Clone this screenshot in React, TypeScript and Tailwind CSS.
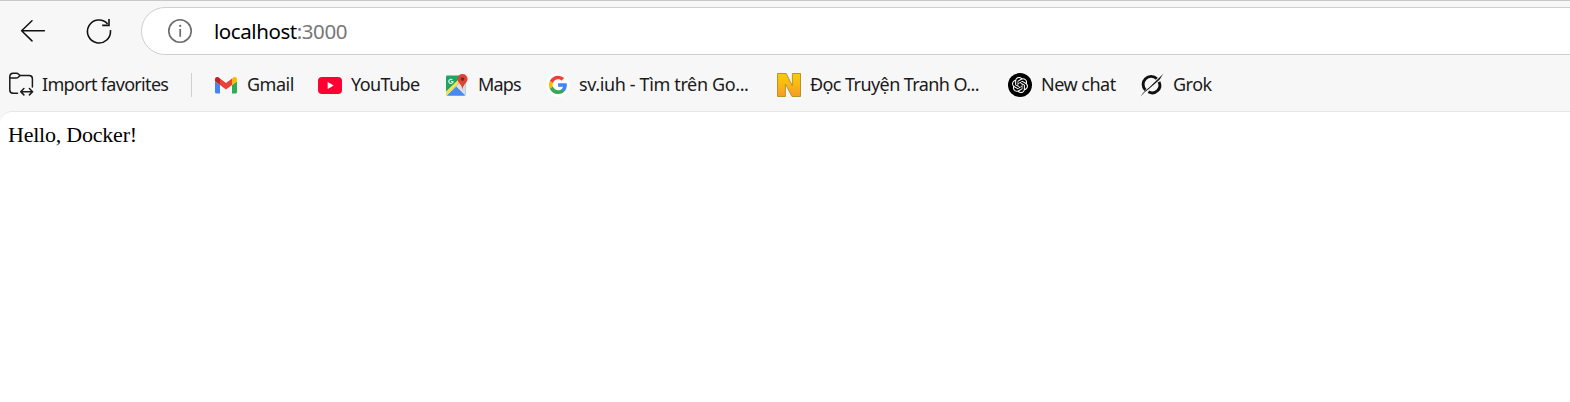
import type { ReactNode } from "react";
import { SiOpenai } from "react-icons/si";

function BackIcon() {
  return (
    <svg width="26" height="24" viewBox="0 0 26 24" fill="none" stroke="#111" strokeWidth="1.5" strokeLinecap="round" strokeLinejoin="round">
      <path d="M24.4 11.8H1.6M12 1.7L1.6 11.8L12 21.9" />
    </svg>
  );
}

function ReloadIcon() {
  return (
    <svg width="26" height="26" viewBox="0 0 26 26" fill="none" stroke="#111" strokeWidth="1.6">
      <path d="M24.4 12.2A11.5 11.5 0 1 1 21.6 5.9" />
      <path d="M23 .9V7.4H16.2" />
    </svg>
  );
}

function InfoIcon() {
  return (
    <svg width="24" height="24" viewBox="0 0 24 24" fill="none" stroke="#6b6b6b">
      <circle cx="12" cy="12" r="11.2" strokeWidth="1.6" />
      <path d="M12.2 10V17.8" strokeWidth="1.7" />
      <circle cx="12.2" cy="6.9" r="1.1" fill="#6b6b6b" stroke="none" />
    </svg>
  );
}

function ImportIcon() {
  return (
    <svg width="26" height="26" viewBox="0 0 26 26" fill="none" stroke="#1a1a1a" strokeWidth="1.5" strokeLinecap="round" strokeLinejoin="round">
      <path d="M9.5 21.3H5A3.3 3.3 0 0 1 1.8 18V4.3A3.3 3.3 0 0 1 5 1.2H8.6Q9.7 1.2 10.4 2L12 3.5H21.2A3.3 3.3 0 0 1 24.4 6.8V15" />
      <path d="M1.9 6.1H8Q9.4 6.1 10.3 5.2L12 3.5" />
      <path d="M13 19.7H24.4M15.9 16.5L12.7 19.7L15.9 22.9M21.4 16.5L24.6 19.7L21.4 22.9" />
    </svg>
  );
}

function GmailIcon() {
  return (
    <svg width="22" height="17" viewBox="0 0 22 17">
      <path fill="#4285f4" d="M1.5 16.5H5V8L0 4.2V15a1.5 1.5 0 0 0 1.5 1.5Z" />
      <path fill="#34a853" d="M17 16.5h3.5A1.5 1.5 0 0 0 22 15V4.2L17 8Z" />
      <path fill="#fbbc04" d="M17 1.6V8l5-3.8V2.3c0-1.9-2.2-2.9-3.7-1.8Z" />
      <path fill="#ea4335" d="M5 8V1.6l6 4.5 6-4.5V8l-6 4.5Z" />
      <path fill="#c5221f" d="M0 2.3v1.9L5 8V1.6L3.7.5C2.2-.6 0 .4 0 2.3Z" />
    </svg>
  );
}

function YouTubeIcon() {
  return (
    <svg width="24" height="17" viewBox="0 0 24 17">
      <rect width="24" height="17" rx="4" fill="#ff0033" />
      <path fill="#fff" d="M9.7 5.1v6.8l6-3.4Z" />
    </svg>
  );
}

function MapsIcon() {
  return (
    <svg width="22" height="22" viewBox="0 0 22 22">
      <clipPath id="maps-sheet"><rect x="0" y="1.5" width="19.5" height="20" rx="1.2" /></clipPath>
      <g clipPath="url(#maps-sheet)">
        <path fill="#1fa463" d="M0 1h20v21H0Z" />
        <path fill="#d9dce0" d="M10 12l3-3 8 0v14Z" />
        <path fill="#4a89f3" d="M1 22L10.3 12.5L20 22Z" />
        <path fill="none" stroke="#ffdf50" strokeWidth="2.8" d="M-1 20.5L14.5 5.5" />
        <path fill="none" stroke="#f5f5f5" strokeWidth="0.8" d="M0 22L10.4 12L21 22.5" />
      </g>
      <path fill="none" stroke="#e8f5ee" strokeWidth="1.2" d="M6.4 5.9A2.1 2.1 0 1 0 7 7.5H5" />
      <path fill="#db4437" d="M16.5 0A5.1 5.1 0 0 0 11.4 5.1C11.4 9 15.8 10 16.5 15.6C17.2 10 21.6 9 21.6 5.1A5.1 5.1 0 0 0 16.5 0Z" />
      <circle cx="16.5" cy="5.1" r="1.8" fill="#7b2720" />
    </svg>
  );
}

function GoogleIcon() {
  return (
    <svg width="24" height="24" viewBox="0 0 24 24">
      <circle cx="12" cy="12" r="12" fill="#fff" />
      <g transform="translate(2.1 1.9) scale(.83)">
        <path fill="#4285F4" d="M22.56 12.25c0-.78-.07-1.53-.2-2.25H12v4.26h5.92c-.26 1.37-1.04 2.53-2.21 3.31v2.77h3.57c2.08-1.92 3.28-4.74 3.28-8.09z" />
        <path fill="#34A853" d="M12 23c2.97 0 5.46-.98 7.28-2.66l-3.57-2.77c-.98.66-2.23 1.06-3.71 1.06-2.86 0-5.29-1.93-6.16-4.53H2.18v2.84C3.99 20.53 7.7 23 12 23z" />
        <path fill="#FBBC05" d="M5.84 14.1c-.22-.66-.35-1.36-.35-2.1s.13-1.44.35-2.1V7.06H2.18C1.43 8.55 1 10.22 1 12s.43 3.45 1.18 4.94z" />
        <path fill="#EA4335" d="M12 5.38c1.62 0 3.06.56 4.21 1.64l3.15-3.15C17.45 2.09 14.97 1 12 1 7.7 1 3.99 3.47 2.18 7.06l3.66 2.84c.87-2.6 3.3-4.52 6.16-4.52z" />
      </g>
    </svg>
  );
}

function ComicIcon() {
  return (
    <svg width="24" height="24" viewBox="0 0 24 24">
      <defs>
        <linearGradient id="comic-gold" x1="0" y1="0" x2="0" y2="1">
          <stop offset="0" stopColor="#f5cd08" />
          <stop offset="0.5" stopColor="#fab712" />
          <stop offset="1" stopColor="#f79a2b" />
        </linearGradient>
      </defs>
      <path fill="url(#comic-gold)" stroke="#b8932f" strokeWidth="1" d="M.5.5H9.2L15.4 13V.5H23.5V23.5H15L8.4 11V23.5H.5Z" />
    </svg>
  );
}

function ChatIcon() {
  return (
    <span className="flex size-6 items-center justify-center rounded-full bg-black text-white">
      <SiOpenai size={16} />
    </span>
  );
}

function GrokIcon() {
  return (
    <svg width="24" height="24" viewBox="0 0 24 24" fill="none" stroke="#111">
      <path strokeWidth="2.9" d="M5.4 17A7.6 7.6 0 0 1 16.8 5.8" />
      <path strokeWidth="2.9" d="M19 8.8A7.6 7.6 0 0 1 8.4 18.8" />
      <path fill="#111" stroke="none" d="M.6 23.4C4 18.6 5.4 17.6 9.2 14.6L23.6.6C20.4 5 20.2 6.8 17.8 8.2L8.8 16C5.6 18.2 3.6 20.2.6 23.4Z" />
    </svg>
  );
}

type FavoriteProps = { icon: ReactNode; label: string; className: string };

function Favorite({ icon, label, className }: FavoriteProps) {
  return (
    <a className={`flex shrink-0 items-center gap-[9px] whitespace-nowrap ${className}`}>
      <span className="flex size-6 shrink-0 items-center justify-center">{icon}</span>
      <span className="pb-0.5">{label}</span>
    </a>
  );
}

export default function App() {
  return (
    <div className="flex h-[402px] w-full flex-col overflow-hidden bg-[#f7f7f7] font-['Noto_Sans',sans-serif] text-[#1a1a1a]">
      <header className="h-[111px] shrink-0 border-t border-[#c8c8c8]">
        <div className="flex h-[60px] items-center pl-5">
          <button className="mr-[40px]" aria-label="Back"><BackIcon /></button>
          <button className="mr-[29px]" aria-label="Refresh"><ReloadIcon /></button>
          <div className="-mr-8 flex h-12 flex-1 items-center rounded-full border border-[#cfcfcf] bg-white pl-[26px]">
            <InfoIcon />
            <span className="ml-[22px] text-[20.5px] leading-none tracking-[-0.43px] text-black">
              localhost<span className="text-[#767676]">:3000</span>
            </span>
          </div>
        </div>
        <nav className="flex h-12 items-center pl-2 text-[18px] leading-6">
          <a className="flex w-[183px] items-center gap-2 whitespace-nowrap tracking-[-0.68px]">
            <ImportIcon />
            <span className="pb-0.5">Import favorites</span>
          </a>
          <span className="mr-[22px] h-6 w-px bg-[#cfcfcf]" />
          <Favorite icon={<GmailIcon />} label="Gmail" className="w-[104px] tracking-[-0.5px]" />
          <Favorite icon={<YouTubeIcon />} label="YouTube" className="w-[127px] tracking-[-0.6px]" />
          <Favorite icon={<MapsIcon />} label="Maps" className="w-[101px] tracking-[-0.8px]" />
          <Favorite icon={<GoogleIcon />} label="sv.iuh - Tìm trên Go..." className="w-[231px] tracking-[-0.37px]" />
          <Favorite icon={<ComicIcon />} label="Đọc Truyện Tranh O..." className="w-[231px] tracking-[-0.58px]" />
          <Favorite icon={<ChatIcon />} label="New chat" className="w-[132px] tracking-[-0.5px]" />
          <Favorite icon={<GrokIcon />} label="Grok" className="tracking-[-0.5px]" />
        </nav>
      </header>
      <main className="-mr-3 flex-1 rounded-tl-xl border-t border-[#e6e6e6] bg-white pt-[10px] pl-2 font-['Liberation_Serif',serif] text-[22px] leading-[25px] tracking-[-0.22px] text-black">
        Hello, Docker!
      </main>
    </div>
  );
}
